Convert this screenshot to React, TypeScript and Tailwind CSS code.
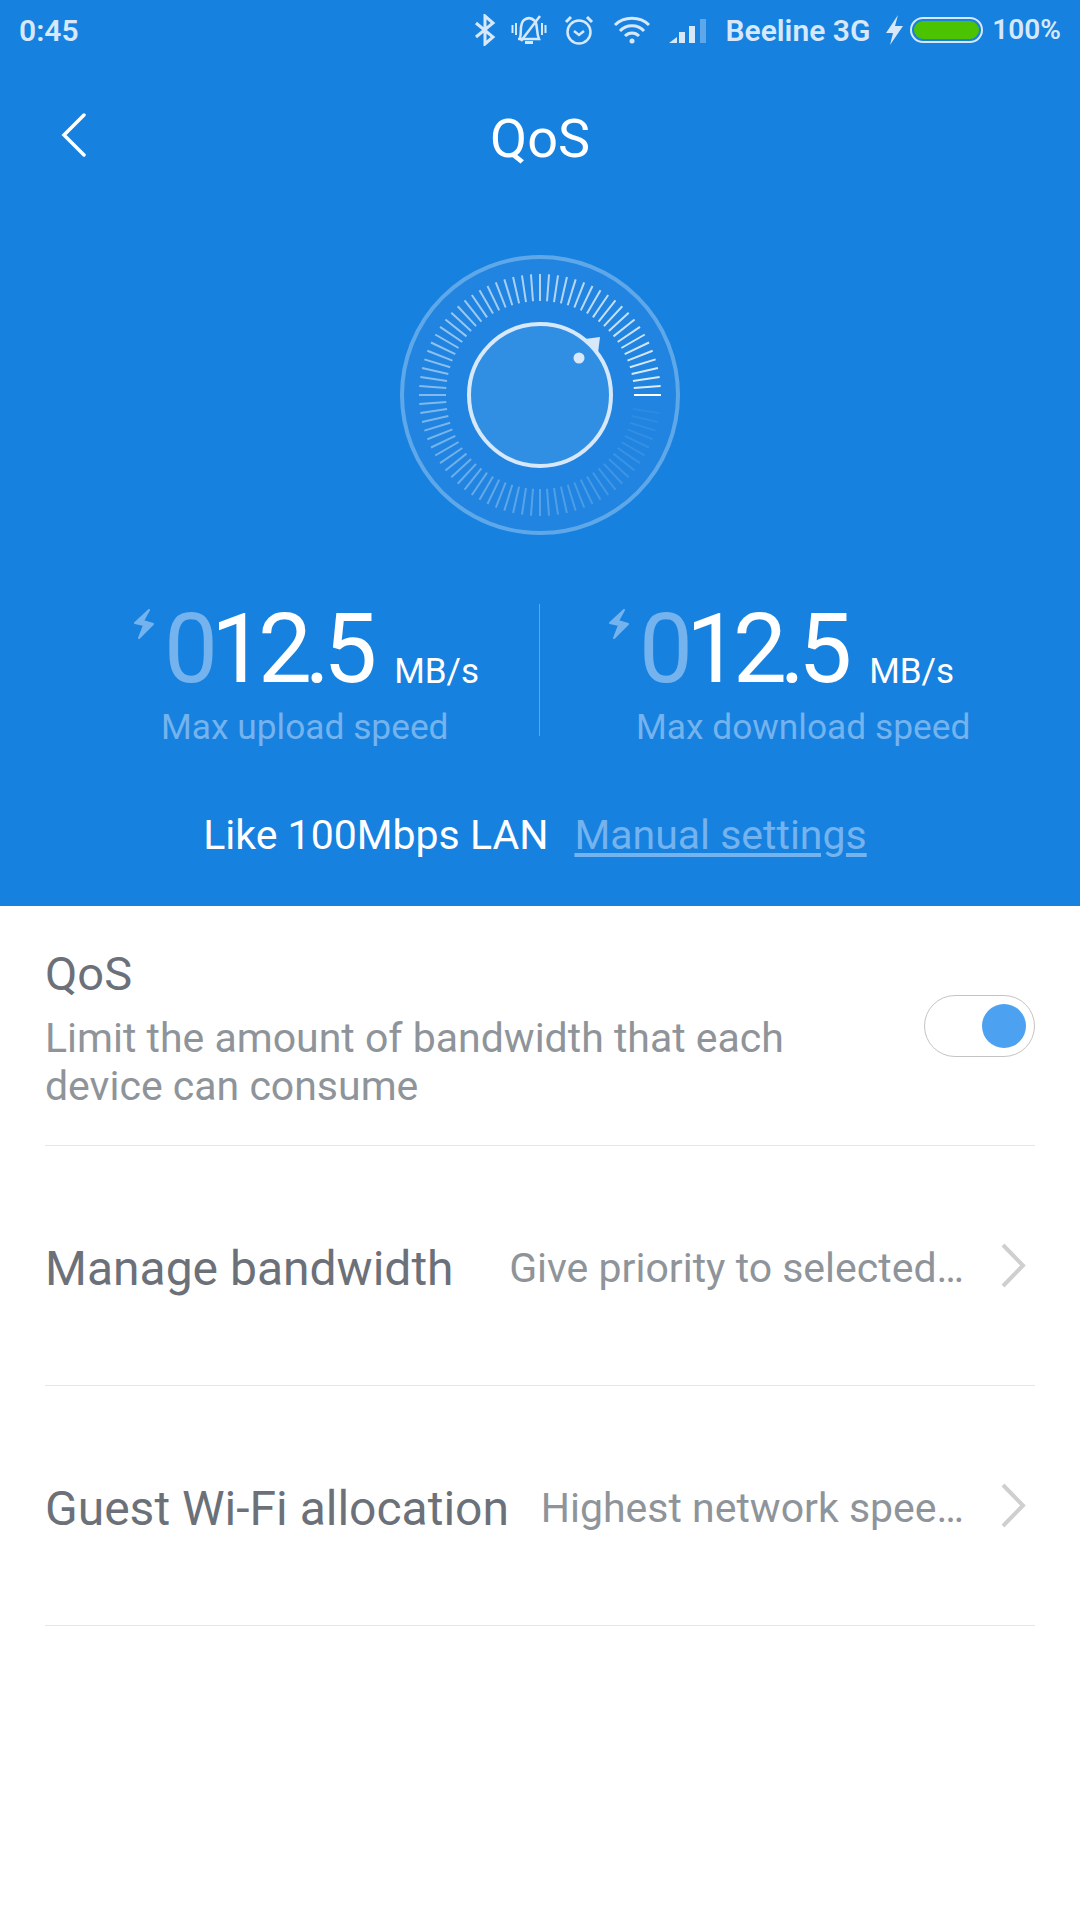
const ticks = Array.from({length: 84}, (_, i) => i);

function tickOpacity(i: number) {
  // brightest on the right, fades going round the dial anticlockwise
  if (i === 0) return 1;
  if (i > 82) return 0;
  return Math.max(0.05, 0.85 - (i / 82) * 0.8);
}

function Dial() {
  return (
    <svg width="300" height="300" viewBox="-150 -150 300 300">
      <circle r="138" fill="#2084e0" stroke="#5ea8ea" strokeWidth="4" />
      {ticks.map((i) => {
        const a = (-i * 360 / 84) * Math.PI / 180;
        return (
          <line
            key={i}
            x1={94 * Math.cos(a)}
            y1={94 * Math.sin(a)}
            x2={121 * Math.cos(a)}
            y2={121 * Math.sin(a)}
            stroke="#ffffff"
            strokeWidth="2"
            opacity={tickOpacity(i)}
          />
        );
      })}
      <circle r="71" fill="#308fe3" stroke="#d6e8fa" strokeWidth="4" />
      <circle cx="39" cy="-37" r="5.5" fill="#d6e8fa" />
      <path d="M45 -56 L60 -58 L58 -42 Z" fill="#d6e8fa" />
    </svg>
  );
}

function Bolt() {
  return (
    <svg width="22" height="32" viewBox="0 0 22 32" className="shrink-0 mt-[7px]" fill="#74b3ee" stroke="#74b3ee" strokeWidth="2" strokeLinejoin="round">
      <path d="M16 2 L2 15 L11 17 L6 30 L20 16 L10 13 Z" />
    </svg>
  );
}

function Stat({pad, label}: {pad: string; label: string}) {
  return (
    <div className={`w-[540px] flex flex-col ${pad}`}>
      <div className="flex items-start h-[96px] -mt-[3px]">
        <Bolt />
        <div className="ml-[9px] text-[96px] leading-[96px] tracking-[-7px] text-white whitespace-nowrap">
          <span className="text-[#74b3ee]">0</span>12.5
        </div>
        <div className="ml-[24px] mt-[49px] text-[35px] leading-[44px] text-white">MB/s</div>
      </div>
      <div className="ml-[28px] mt-[10px] text-[35.3px] leading-[40px] text-[#74b3ee] whitespace-nowrap">{label}</div>
    </div>
  );
}

function ListRow({title, value}: {title: string; value: string}) {
  return (
    <div className="h-[240px] pt-[6px] border-b border-[#e6e6e6] flex items-center justify-between">
      <div className="text-[48px] text-[#6c7179] whitespace-nowrap">{title}</div>
      <div className="flex items-center">
        <div className="text-[41px] text-[#8e9499] whitespace-nowrap">{value}</div>
        <svg width="27" height="47" viewBox="0 0 27 47" fill="none" stroke="#cfcfcf" strokeWidth="4" className="ml-[36px] mr-[8px] -mt-[6px]">
          <path d="M3 3 L23 23.5 L3 44" />
        </svg>
      </div>
    </div>
  );
}

function StatusIcons() {
  return (
    <div className="flex items-center">
      <svg width="22" height="32" viewBox="0 0 22 32" fill="none" stroke="#d6e8fa" strokeWidth="3">
        <path d="M2 9 L19 23 L11 30 V2 L19 9 L2 23" />
      </svg>
      <svg width="36" height="32" viewBox="0 0 36 32" fill="none" stroke="#d6e8fa" strokeWidth="2.5" className="ml-[15px]">
        <path d="M9 24 C11 18 8 10 13 6 C17 3 21 4 24 7 C27 12 25 18 28 25 H7" />
        <path d="M14 28.5 H22" strokeWidth="3" />
        <path d="M10 27 L29 2" />
        <path d="M1.5 11 V19 M5 9 V21 M34.5 11 V19 M31 9 V21" strokeWidth="2" />
      </svg>
      <svg width="32" height="32" viewBox="0 0 32 32" fill="none" stroke="#d6e8fa" strokeWidth="2.5" className="ml-[16px]">
        <circle cx="16" cy="18" r="11.5" />
        <path d="M11 17 L16 21 L21 17" />
        <path d="M3 8 L8 3 M29 8 L24 3" strokeWidth="3" />
      </svg>
      <svg width="38" height="30" viewBox="0 0 38 30" fill="none" stroke="#d6e8fa" strokeWidth="3" className="ml-[18px]">
        <path d="M2 10 C11 1 27 1 36 10" />
        <path d="M7 16 C13 9 25 9 31 16" />
        <path d="M12 21 C16 17 22 17 26 21" />
        <circle cx="19" cy="26" r="2.5" fill="#d6e8fa" stroke="none" />
      </svg>
      <svg width="38" height="26" viewBox="0 0 38 26" className="ml-[18px]">
        <path d="M0 26 L8 20 V26 Z" fill="#d6e8fa" />
        <rect x="10" y="15" width="6" height="11" fill="#d6e8fa" />
        <rect x="20" y="9" width="6" height="17" fill="#d6e8fa" />
        <rect x="31" y="2" width="6" height="24" fill="#5ea8ea" />
      </svg>
      <div className="ml-[18px] text-[30px] font-semibold">Beeline 3G</div>
      <svg width="17" height="30" viewBox="0 0 17 30" fill="#d6e8fa" className="ml-[16px]">
        <path d="M12 0 L0 18 H7 L4 30 L17 11 H9 Z" />
      </svg>
      <div className="ml-[7px] w-[73px] h-[26px] rounded-full border-2 border-[#d6e8fa] p-[2px]">
        <div className="h-full rounded-full bg-[#4cc300]" />
      </div>
      <div className="ml-[9px] text-[28px] font-semibold">100%</div>
    </div>
  );
}

export default function App() {
  return (
    <div className="w-[1080px] h-[1920px] bg-white font-['Roboto',sans-serif]">
      <div className="h-[906px] bg-[#1781df] flex flex-col">
        <div className="h-[60px] pl-[19px] pr-[19px] flex items-center justify-between text-[#d6e8fa]">
          <div className="text-[30px] font-semibold">0:45</div>
          <StatusIcons />
        </div>

        <div className="h-[156px] relative flex items-center justify-center">
          <svg width="26" height="44" viewBox="0 0 26 44" fill="none" stroke="#ffffff" strokeWidth="3.5" strokeLinecap="round" className="absolute left-[61px] top-[53px]">
            <path d="M23 2 L3 22 L23 42" />
          </svg>
          <div className="text-[54px] text-white">QoS</div>
        </div>

        <div className="mt-[29px] flex justify-center">
          <Dial />
        </div>

        <div className="mt-[59px] flex h-[132px]">
          <Stat pad="pl-[133px]" label="Max upload speed" />
          <div className="w-px h-full shrink-0 -ml-px bg-[#5ea8ea]" />
          <Stat pad="pl-[68px]" label="Max download speed" />
        </div>

        <div className="mt-[69px] pr-[10px] flex justify-center items-center gap-[26px] text-[41px] leading-[60px]">
          <div className="text-white">Like 100Mbps LAN</div>
          <div className="text-[#74b3ee] underline underline-offset-4">Manual settings</div>
        </div>
      </div>

      <div className="px-[45px]">
        <div className="h-[240px] border-b border-[#e6e6e6] flex items-start justify-between">
          <div className="mt-[40px] w-[800px]">
            <div className="text-[47px] leading-[56px] text-[#6c7179]">QoS</div>
            <div className="mt-[12px] text-[41px] leading-[48px] text-[#8e9499]">
              Limit the amount of bandwidth that each device can consume
            </div>
          </div>
          <div className="mt-[89px] w-[111px] h-[62px] rounded-full border border-[#c4c4c4] flex items-center justify-end pr-[8px]">
            <div className="w-[44px] h-[44px] rounded-full bg-[#4da1f1]" />
          </div>
        </div>
        <ListRow title="Manage bandwidth" value="Give priority to selected…" />
        <ListRow title="Guest Wi-Fi allocation" value="Highest network spee…" />
      </div>
    </div>
  );
}
